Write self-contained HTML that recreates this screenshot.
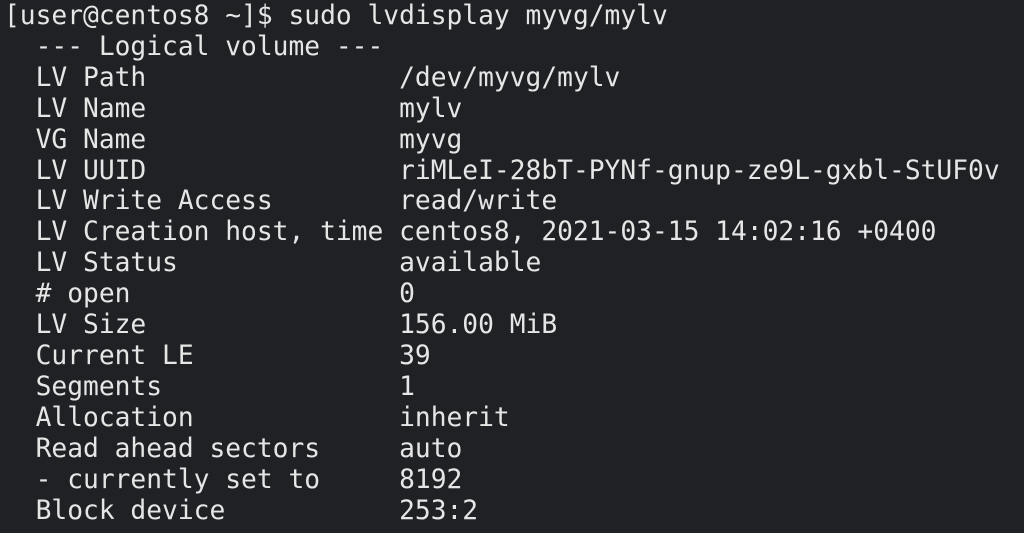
<!DOCTYPE html>
<html><head><meta charset="utf-8"><style>
html,body{margin:0;padding:0;background:#1f2124;width:1024px;height:533px;overflow:hidden}
pre{margin:0;padding:1px 0 0 4px;font-family:"DejaVu Sans Mono",monospace;font-size:26.25px;line-height:30.9px;color:#e6e6e6;white-space:pre}
</style></head><body><pre>[user@centos8 ~]$ sudo lvdisplay myvg/mylv
  --- Logical volume ---
  LV Path                /dev/myvg/mylv
  LV Name                mylv
  VG Name                myvg
  LV UUID                riMLeI-28bT-PYNf-gnup-ze9L-gxbl-StUF0v
  LV Write Access        read/write
  LV Creation host, time centos8, 2021-03-15 14:02:16 +0400
  LV Status              available
  # open                 0
  LV Size                156.00 MiB
  Current LE             39
  Segments               1
  Allocation             inherit
  Read ahead sectors     auto
  - currently set to     8192
  Block device           253:2</pre></body></html>
